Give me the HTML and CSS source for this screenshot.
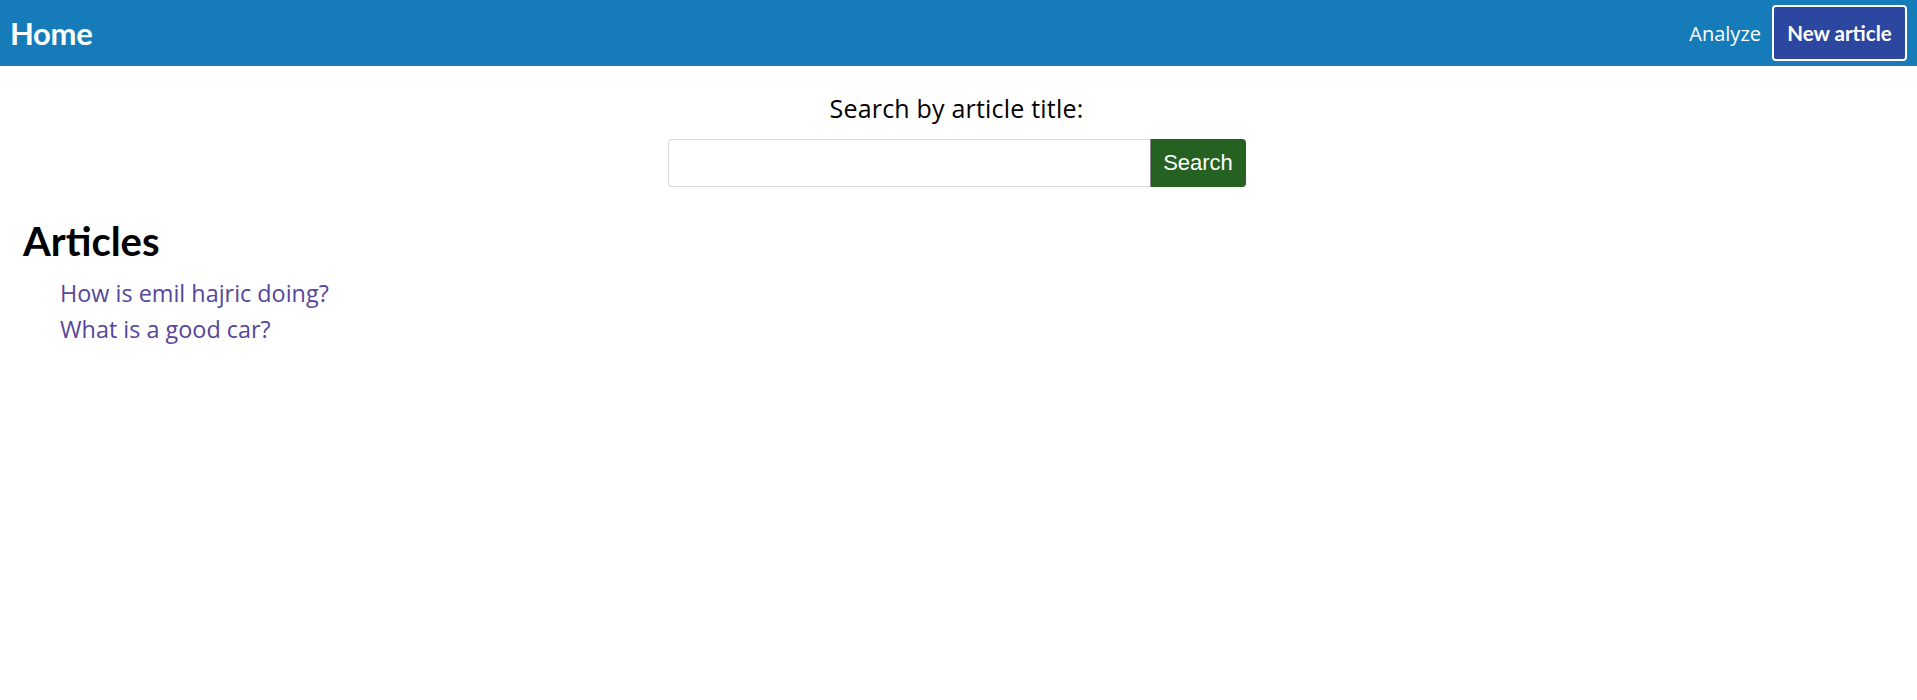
FILE: index.html
```html
<!DOCTYPE html>
<html>
<head>
<meta charset="utf-8">
<title>Home</title>
<link rel="stylesheet" href="styles.css">
</head>
<body>
<header class="topbar">
  <a class="brand" href="#">Home</a>
  <nav class="nav">
    <a class="nav-link" href="#">Analyze</a>
    <a class="nav-button" href="#">New article</a>
  </nav>
</header>
<main class="content">
  <section class="search">
    <label class="search-label" for="q">Search by article title:</label>
    <form class="search-form">
      <input class="search-input" id="q" type="text">
      <button class="search-button" type="button">Search</button>
    </form>
  </section>
  <section class="articles">
    <h1 class="articles-title">Articles</h1>
    <ul class="article-list">
      <li><a class="article-link" href="#">How is emil hajric doing?</a></li>
      <li><a class="article-link" href="#">What is a good car?</a></li>
    </ul>
  </section>
</main>
</body>
</html>
```
FILE: styles.css
```css
* { box-sizing: border-box; }
html, body { margin: 0; padding: 0; background: #fff; }
body { font-family: "Open Sans", Lato, sans-serif; color: #000; }

.topbar {
  height: 66px;
  background: #157cb9;
  display: flex;
  align-items: center;
  justify-content: space-between;
  padding: 0 10px 0 10px;
}
.brand {
  color: #fff;
  text-decoration: none;
  font-family: Lato, sans-serif;
  font-weight: 700;
  font-size: 31px;
  letter-spacing: -0.3px;
}
.nav { display: flex; align-items: center; }
.nav-link {
  color: #fff;
  text-decoration: none;
  font-size: 20px;
  margin-right: 11px;
}
.nav-button {
  display: flex;
  align-items: center;
  justify-content: center;
  width: 135px;
  height: 56px;
  background: #2c47a0;
  border: 2px solid #fff;
  border-radius: 4px;
  color: #fff;
  text-decoration: none;
  font-family: Lato, sans-serif;
  font-weight: 700;
  font-size: 20.5px;
}

.search {
  display: flex;
  flex-direction: column;
  align-items: center;
  padding-top: 26px;
  padding-right: 4px;
}
.search-label {
  font-size: 25px;
  line-height: 32px;
  letter-spacing: 0.2px;
}
.search-form {
  display: flex;
  margin-top: 15px;
}
.search-input {
  width: 482px;
  height: 48px;
  border: 1px solid #dcdcdc;
  border-right: none;
  border-radius: 4px 0 0 4px;
  font-size: 20px;
  padding: 0 10px;
  outline: none;
}
.search-button {
  width: 96px;
  height: 48px;
  border: none;
  border-left: 1px solid #8a8a8a;
  border-radius: 0 4px 4px 0;
  background: #256222;
  color: #fff;
  font-family: "Liberation Sans", Arial, sans-serif;
  font-size: 22px;
  padding: 0;
}

.articles { padding: 0 23px; }
.articles-title {
  margin: 30px 0 12px 0;
  font-family: Lato, sans-serif;
  font-size: 40px;
  font-weight: 700;
  line-height: 48px;
}
.article-list {
  list-style: none;
  margin: 0;
  padding: 0 0 0 37px;
}
.article-list li { line-height: 33px; }
.article-link {
  color: #57469a;
  text-decoration: none;
  font-size: 23.4px;
}
```
